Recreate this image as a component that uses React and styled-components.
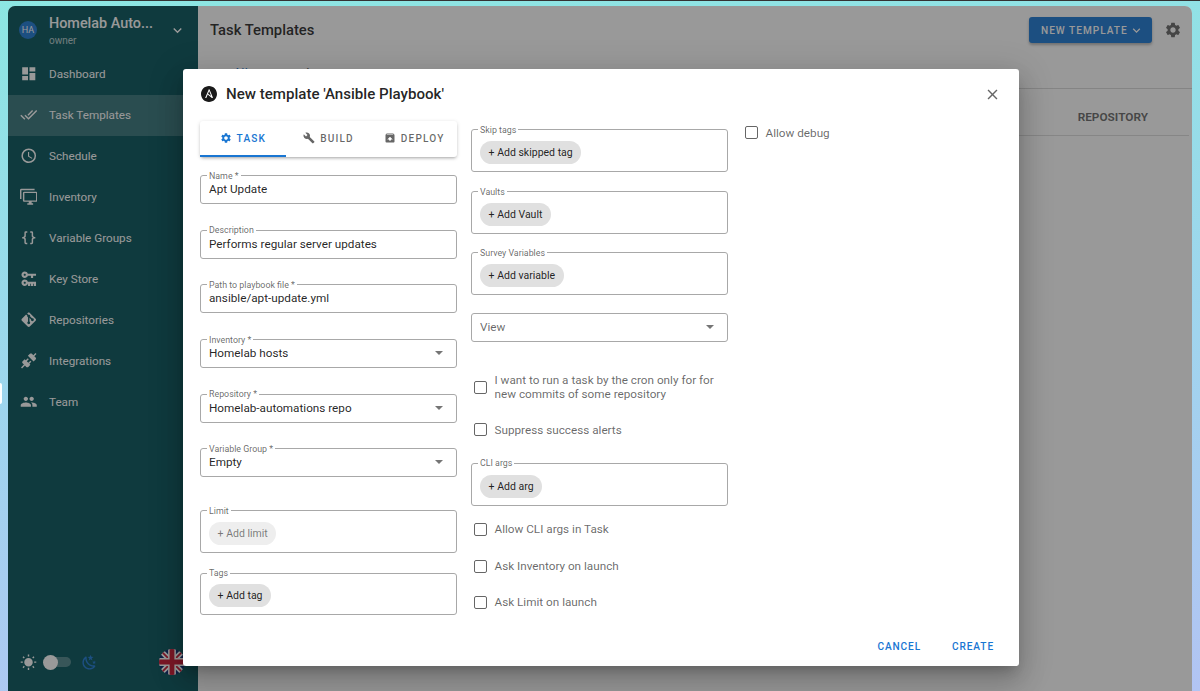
import React from 'react';
import styled, { createGlobalStyle } from 'styled-components';
import { MdDashboard, MdDoneAll, MdPeople, MdSettings, MdBuild, MdUnarchive, MdWbSunny, MdClose, MdExpandMore } from 'react-icons/md';
import { SiAnsible } from 'react-icons/si';

const GlobalStyle = createGlobalStyle`
  html, body { margin: 0; height: 100%; }
  body {
    font-family: Roboto, "Liberation Sans", sans-serif;
    background: linear-gradient(175deg, #8ce6e2 0%, #a0d4ee 55%, #b2c4f3 100%);
    overflow: hidden;
  }
  * { box-sizing: border-box; }
`;

const Page = styled.div`
  height: 691px;
  padding: 5px 8px 0;
  border-top: 1px solid #333;
`;

const ScreenHandle = styled.div`
  position: absolute;
  left: 0;
  top: 383px;
  width: 2px;
  height: 21px;
  background: #fff;
  border-radius: 0 2px 2px 0;
`;

const AppWindow = styled.div`
  position: relative;
  display: flex;
  height: 685px;
  background: #fff;
  border-radius: 7px 7px 0 0;
  overflow: hidden;
`;

const Sidebar = styled.aside`
  width: 190px;
  flex: none;
  background: #005057;
  color: #fff;
  display: flex;
  flex-direction: column;
`;

const Account = styled.div`
  height: 48px;
  padding: 0 12px 0 11px;
  display: flex;
  align-items: center;
`;

const Avatar = styled.div`
  width: 18px;
  height: 18px;
  border-radius: 50%;
  background: #1976d2;
  font-size: 9px;
  display: flex;
  align-items: center;
  justify-content: center;
  margin-right: 12px;
`;

const AccountText = styled.div`
  flex: 1;
  min-width: 0;
  padding-top: 2px;
`;

const AccountName = styled.div`
  font-size: 14.4px;
  font-weight: 500;
  line-height: 18px;
  white-space: nowrap;
`;

const AccountRole = styled.div`
  font-size: 10px;
  line-height: 15px;
  opacity: 0.7;
`;

const NavList = styled.nav`
  margin-top: 0;
  padding-top: 0;
`;

const NavItem = styled.div`
  height: 41px;
  display: flex;
  align-items: center;
  padding: 0 0 1px 11.5px;
  gap: 12px;
  font-size: 11.7px;
  background: ${(p) => (p.$active ? 'rgba(255,255,255,0.2)' : 'transparent')};
  svg { width: 17.5px; height: 17.5px; fill: currentColor; flex: none; }
`;

const SidebarFooter = styled.div`
  margin-top: auto;
  height: 58px;
  padding: 0 13px 0 11.5px;
  display: flex;
  align-items: center;
  margin-bottom: 0;
`;

const SunIcon = styled(MdWbSunny)`
  width: 17px;
  height: 17px;
  margin-right: 6px;
`;

const ToggleTrack = styled.div`
  position: relative;
  width: 24px;
  height: 10px;
  border-radius: 5px;
  background: rgba(255, 255, 255, 0.3);
  margin-left: 4px;
`;

const ToggleThumb = styled.div`
  position: absolute;
  left: -4px;
  top: -2.5px;
  width: 15px;
  height: 15px;
  border-radius: 50%;
  background: #fff;
`;

const MoonIcon = styled.svg`
  width: 17px;
  height: 17px;
  fill: #1976d2;
  margin-left: 10px;
`;

const FlagRound = styled.svg`
  width: 26px;
  height: 26px;
  margin-left: auto;
  border-radius: 50%;
`;

const Main = styled.main`
  flex: 1;
  min-width: 0;
  display: flex;
  flex-direction: column;
`;

const TopBar = styled.header`
  height: 48px;
  flex: none;
  padding: 0 10px 0 12px;
  display: flex;
  align-items: center;
`;

const PageTitle = styled.h1`
  margin: 0;
  flex: 1;
  font-size: 14.8px;
  font-weight: 500;
  color: rgba(0, 0, 0, 0.87);
`;

const NewButton = styled.button`
  width: 123px;
  height: 26px;
  border: 0;
  border-radius: 3px;
  padding: 0 0 0 12px;
  background: #1976d2;
  color: #fff;
  font: 500 10.1px Roboto, sans-serif;
  letter-spacing: 1px;
  display: flex;
  align-items: center;
  gap: 1px;
  margin-right: 12px;
  box-shadow: 0 2px 3px rgba(0, 0, 0, 0.3);
  svg { width: 15px; height: 15px; }
`;

const GearButton = styled(MdSettings)`
  width: 18px;
  height: 18px;
  color: #666;
`;

const TabStrip = styled.div`
  height: 35px;
  flex: none;
  padding: 13px 0 0 36px;
  border-bottom: 1px solid #d8d8d8;
  display: flex;
  gap: 56px;
  font-size: 10.1px;
  font-weight: 500;
  letter-spacing: 0.9px;
  color: #1976d2;
`;

const TabPeek = styled.span`
  color: ${(p) => (p.$muted ? '#666' : '#1976d2')};
`;

const TableHead = styled.div`
  height: 47px;
  flex: none;
  margin-right: 3px;
  padding: 10px 41px 0 0;
  border-bottom: 1px solid #dcdcdc;
  display: flex;
  align-items: center;
  justify-content: flex-end;
  font-size: 11.8px;
  font-weight: 700;
  color: rgba(0, 0, 0, 0.6);
`;

const Scrim = styled.div`
  position: absolute;
  inset: 0;
  background: rgba(33, 33, 33, 0.46);
  display: flex;
  justify-content: center;
  align-items: flex-start;
  padding: 63px 0 0 2px;
`;

const Dialog = styled.div`
  width: 836px;
  height: 597px;
  background: #fff;
  border-radius: 3px;
  display: flex;
  flex-direction: column;
  box-shadow: 0 8px 11px -5px rgba(0, 0, 0, 0.2), 0 17px 27px 2px rgba(0, 0, 0, 0.14), 0 6px 33px 6px rgba(0, 0, 0, 0.12);
`;

const DialogHeader = styled.div`
  height: 52px;
  flex: none;
  padding: 0 20px 2px 18px;
  display: flex;
  align-items: center;
`;

const LogoIcon = styled(SiAnsible)`
  width: 16px;
  height: 16px;
  color: #1a1a1a;
  margin-right: 9px;
`;

const DialogTitle = styled.h2`
  margin: 0;
  flex: 1;
  font-size: 15.1px;
  font-weight: 500;
  color: rgba(0, 0, 0, 0.87);
`;

const CloseIcon = styled(MdClose)`
  width: 17px;
  height: 17px;
  color: #666;
  margin-right: -2px;
`;

const DialogBody = styled.div`
  flex: 1;
  padding: 0 17px;
  display: flex;
  gap: 14px;
`;

const Column = styled.div`
  width: 257px;
  flex: none;
  display: flex;
  flex-direction: column;
`;

const TabsCard = styled.div`
  height: 36px;
  flex: none;
  display: flex;
  border-radius: 3px;
  background: #fff;
  box-shadow: 0 2px 3px -1px rgba(0, 0, 0, 0.25), 0 1px 4px rgba(0, 0, 0, 0.14);
`;

const Tab = styled.div`
  width: 33.333%;
  display: flex;
  align-items: center;
  justify-content: center;
  gap: 5px;
  font-size: 10.1px;
  font-weight: 500;
  letter-spacing: 1.15px;
  color: ${(p) => (p.$active ? '#1976d2' : 'rgba(0,0,0,0.6)')};
  border-bottom: 2px solid ${(p) => (p.$active ? '#1976d2' : 'transparent')};
  svg { width: 12px; height: 12px; }
`;

const FieldBox = styled.div`
  position: relative;
  flex: none;
  height: ${(p) => (p.$chips ? '42.7px' : '29px')};
  margin-top: ${(p) => p.$mt}px;
  border: 1px solid #a8a8a8;
  border-radius: 3px;
  padding: ${(p) => (p.$chips ? '10.8px 0 0 8px' : '0 8px 1px')};
  display: flex;
  align-items: ${(p) => (p.$chips ? 'flex-start' : 'center')};
  justify-content: space-between;
  font-size: 11.73px;
  color: rgba(0, 0, 0, 0.87);
`;

const FieldLabel = styled.label`
  position: absolute;
  left: 6px;
  top: -5.5px;
  padding: 0 2px;
  background: #fff;
  font-size: 8.85px;
  line-height: 10px;
  color: rgba(0, 0, 0, 0.6);
`;

const FieldValue = styled.span`
  color: ${(p) => (p.$placeholder ? 'rgba(0,0,0,0.6)' : 'inherit')};
`;

const SelectArrow = styled.span`
  width: 0;
  height: 0;
  margin-right: 5px;
  border-left: 4px solid transparent;
  border-right: 4px solid transparent;
  border-top: 4px solid #757575;
`;

const Chip = styled.span`
  height: 23px;
  padding: 0 8.6px;
  border-radius: 12px;
  display: inline-flex;
  align-items: center;
  background: ${(p) => (p.$disabled ? '#eeeeee' : '#e0e0e0')};
  color: ${(p) => (p.$disabled ? 'rgba(0,0,0,0.5)' : 'rgba(0,0,0,0.87)')};
  font-size: 10.5px;
`;

const CheckRow = styled.div`
  flex: none;
  margin-top: ${(p) => p.$mt}px;
  padding-left: 2.5px;
  display: flex;
  align-items: center;
  gap: 8px;
  font-size: 11.73px;
  line-height: 14.6px;
  color: rgba(0, 0, 0, 0.6);
`;

const CheckBox = styled.span`
  width: 13px;
  height: 13px;
  flex: none;
  border: 1.6px solid #666;
  border-radius: 2px;
`;

const DialogFooter = styled.div`
  height: 40px;
  flex: none;
  padding: 0 25px 0 0;
  display: flex;
  justify-content: flex-end;
  align-items: center;
  gap: 31px;
`;

const TextButton = styled.button`
  border: 0;
  padding: 0;
  background: none;
  color: #1976d2;
  font: 500 10.1px Roboto, sans-serif;
  letter-spacing: 0.9px;
`;

const Icon = ({ d }) => (
  <svg viewBox="0 0 24 24"><path d={d} /></svg>
);

const navItems = [
  { label: 'Dashboard', icon: <MdDashboard /> },
  { label: 'Task Templates', icon: <MdDoneAll />, active: true },
  { label: 'Schedule', icon: <Icon d="M12,20A8,8 0 0,0 20,12A8,8 0 0,0 12,4A8,8 0 0,0 4,12A8,8 0 0,0 12,20M12,2A10,10 0 0,1 22,12A10,10 0 0,1 12,22C6.47,22 2,17.5 2,12A10,10 0 0,1 12,2M12.5,7V12.25L17,14.92L16.25,16.15L11,13V7H12.5Z" /> },
  { label: 'Inventory', icon: <Icon d="M22,17V7H6V17H22M22,5A2,2 0 0,1 24,7V17C24,18.11 23.1,19 22,19H16V21H18V23H10V21H12V19H6C4.89,19 4,18.1 4,17V7A2,2 0 0,1 6,5H22M2,3V15H0V3A2,2 0 0,1 2,1H20V3H2Z" /> },
  { label: 'Variable Groups', icon: <Icon d="M8,3A2,2 0 0,0 6,5V9A2,2 0 0,1 4,11H3V13H4A2,2 0 0,1 6,15V19A2,2 0 0,0 8,21H10V19H8V14A2,2 0 0,0 6,12A2,2 0 0,0 8,10V5H10V3M16,3A2,2 0 0,1 18,5V9A2,2 0 0,0 20,11H21V13H20A2,2 0 0,0 18,15V19A2,2 0 0,1 16,21H14V19H16V14A2,2 0 0,1 18,12A2,2 0 0,1 16,10V5H14V3H16Z" /> },
  { label: 'Key Store', icon: <Icon d="M6.5 2C8.46 2 10.13 3.25 10.74 5H22V8H18V11H15V8H10.74C10.13 9.75 8.46 11 6.5 11C4 11 2 9 2 6.5C2 4 4 2 6.5 2M6.5 5C5.67 5 5 5.67 5 6.5C5 7.33 5.67 8 6.5 8C7.33 8 8 7.33 8 6.5C8 5.67 7.33 5 6.5 5M6.5 13C8.46 13 10.13 14.25 10.74 16H22V22H19V19H18V22H15V19H14V22H11V19H10.74C10.13 20.75 8.46 22 6.5 22C4 22 2 20 2 17.5C2 15 4 13 6.5 13M6.5 16C5.67 16 5 16.67 5 17.5C5 18.33 5.67 19 6.5 19C7.33 19 8 18.33 8 17.5C8 16.67 7.33 16 6.5 16Z" /> },
  { label: 'Repositories', icon: <Icon d="M2.6,10.59L8.38,4.8L10.07,6.5C9.83,7.35 10.22,8.28 11,8.73V14.27C10.4,14.61 10,15.26 10,16A2,2 0 0,0 12,18A2,2 0 0,0 14,16C14,15.26 13.6,14.61 13,14.27V9.41L15.07,11.5C15,11.65 15,11.82 15,12A2,2 0 0,0 17,14A2,2 0 0,0 19,12A2,2 0 0,0 17,10C16.82,10 16.65,10 16.5,10.07L13.93,7.5C14.19,6.57 13.71,5.55 12.78,5.16C12.35,5 11.9,4.96 11.5,5.07L9.8,3.38L10.59,2.6C11.37,1.81 12.63,1.81 13.41,2.6L21.4,10.59C22.19,11.37 22.19,12.63 21.4,13.41L13.41,21.4C12.63,22.19 11.37,22.19 10.59,21.4L2.6,13.41C1.81,12.63 1.81,11.37 2.6,10.59Z" /> },
  { label: 'Integrations', icon: <Icon d="M21.4 7.5C22.2 8.3 22.2 9.6 21.4 10.3L18.6 13.1L10.8 5.3L13.6 2.5C14.4 1.7 15.7 1.7 16.4 2.5L18.2 4.3L21.2 1.3L22.6 2.7L19.6 5.7L21.4 7.5M15.6 13.3L14.2 11.9L11.4 14.7L9.3 12.6L12.1 9.8L10.7 8.4L7.9 11.2L6.4 9.8L3.6 12.6C2.8 13.4 2.8 14.7 3.6 15.4L5.4 17.2L1.4 21.2L2.8 22.6L6.8 18.6L8.6 20.4C9.4 21.2 10.7 21.2 11.4 20.4L14.2 17.6L12.8 16.2L15.6 13.3Z" /> },
  { label: 'Team', icon: <MdPeople /> },
];

const Field = ({ label, value, mt, select, placeholder }) => (
  <FieldBox $mt={mt}>
    {label && <FieldLabel>{label}</FieldLabel>}
    <FieldValue $placeholder={placeholder}>{value}</FieldValue>
    {select && <SelectArrow />}
  </FieldBox>
);

const ChipField = ({ label, chip, mt, disabled }) => (
  <FieldBox $chips $mt={mt}>
    <FieldLabel>{label}</FieldLabel>
    <Chip $disabled={disabled}>{chip}</Chip>
  </FieldBox>
);

const Check = ({ mt, children }) => (
  <CheckRow $mt={mt}>
    <CheckBox />
    <span>{children}</span>
  </CheckRow>
);

export default function App() {
  return (
    <Page>
      <GlobalStyle />
      <ScreenHandle />
      <AppWindow>
        <Sidebar>
          <Account>
            <Avatar>HA</Avatar>
            <AccountText>
              <AccountName>Homelab Auto...</AccountName>
              <AccountRole>owner</AccountRole>
            </AccountText>
            <MdExpandMore size={17} />
          </Account>
          <NavList>
            {navItems.map((item) => (
              <NavItem key={item.label} $active={item.active}>
                {item.icon}
                {item.label}
              </NavItem>
            ))}
          </NavList>
          <SidebarFooter>
            <SunIcon />
            <ToggleTrack><ToggleThumb /></ToggleTrack>
            <MoonIcon viewBox="0 0 24 24">
              <path d="M17.75,4.09L15.22,6.03L16.13,9.09L13.5,7.28L10.87,9.09L11.78,6.03L9.25,4.09L12.44,4L13.5,1L14.56,4L17.75,4.09M21.25,11L19.61,12.25L20.2,14.23L18.5,13.06L16.8,14.23L17.39,12.25L15.75,11L17.81,10.95L18.5,9L19.19,10.95L21.25,11M18.97,15.95C19.8,15.87 20.69,17.05 20.16,17.8C19.84,18.25 19.5,18.67 19.08,19.07C15.17,23 8.84,23 4.94,19.07C1.03,15.17 1.03,8.83 4.94,4.93C5.34,4.53 5.76,4.17 6.21,3.85C6.96,3.32 8.14,4.21 8.06,5.04C7.79,7.9 8.75,10.87 10.95,13.06C13.14,15.26 16.1,16.22 18.97,15.95M17.33,17.97C14.5,17.81 11.7,16.64 9.53,14.5C7.36,12.31 6.2,9.5 6.04,6.68C3.23,9.82 3.34,14.64 6.35,17.66C9.37,20.67 14.19,20.78 17.33,17.97Z" />
            </MoonIcon>
            <FlagRound viewBox="0 0 60 60">
              <rect width="60" height="60" fill="#012169" />
              <path d="M0,0 60,60 M60,0 0,60" stroke="#fff" strokeWidth="12" />
              <path d="M0,0 60,60 M60,0 0,60" stroke="#C8102E" strokeWidth="4" />
              <path d="M30,0V60 M0,30H60" stroke="#fff" strokeWidth="18" />
              <path d="M30,0V60 M0,30H60" stroke="#C8102E" strokeWidth="11" />
            </FlagRound>
          </SidebarFooter>
        </Sidebar>

        <Main>
          <TopBar>
            <PageTitle>Task Templates</PageTitle>
            <NewButton>NEW TEMPLATE <MdExpandMore /></NewButton>
            <GearButton />
          </TopBar>
          <TabStrip>
            <TabPeek>All</TabPeek>
            <TabPeek $muted>A</TabPeek>
          </TabStrip>
          <TableHead>REPOSITORY</TableHead>
        </Main>

        <Scrim>
          <Dialog>
            <DialogHeader>
              <LogoIcon />
              <DialogTitle>New template 'Ansible Playbook'</DialogTitle>
              <CloseIcon />
            </DialogHeader>
            <DialogBody>
              <Column>
                <TabsCard>
                  <Tab $active><MdSettings />TASK</Tab>
                  <Tab><MdBuild />BUILD</Tab>
                  <Tab><MdUnarchive />DEPLOY</Tab>
                </TabsCard>
                <Field mt={18} label="Name *" value="Apt Update" />
                <Field mt={25.7} label="Description" value="Performs regular server updates" />
                <Field mt={25.7} label="Path to playbook file *" value="ansible/apt-update.yml" />
                <Field mt={25.7} label="Inventory *" value="Homelab hosts" select />
                <Field mt={25.7} label="Repository *" value="Homelab-automations repo" select />
                <Field mt={25.7} label="Variable Group *" value="Empty" select />
                <ChipField mt={33} label="Limit" chip="+ Add limit" disabled />
                <ChipField mt={19.5} label="Tags" chip="+ Add tag" />
              </Column>
              <Column>
                <ChipField mt={8.3} label="Skip tags" chip="+ Add skipped tag" />
                <ChipField mt={19.5} label="Vaults" chip="+ Add Vault" />
                <ChipField mt={18.3} label="Survey Variables" chip="+ Add variable" />
                <Field mt={18} value="View" select placeholder />
                <Check mt={30.7}>I want to run a task by the cron only for for<br />new commits of some repository</Check>
                <Check mt={20.5}>Suppress success alerts</Check>
                <ChipField mt={25.8} label="CLI args" chip="+ Add arg" />
                <Check mt={16.6}>Allow CLI args in Task</Check>
                <Check mt={22}>Ask Inventory on launch</Check>
                <Check mt={22}>Ask Limit on launch</Check>
              </Column>
              <Column>
                <Check mt={4.5}>Allow debug</Check>
              </Column>
            </DialogBody>
            <DialogFooter>
              <TextButton>CANCEL</TextButton>
              <TextButton>CREATE</TextButton>
            </DialogFooter>
          </Dialog>
        </Scrim>
      </AppWindow>
    </Page>
  );
}
